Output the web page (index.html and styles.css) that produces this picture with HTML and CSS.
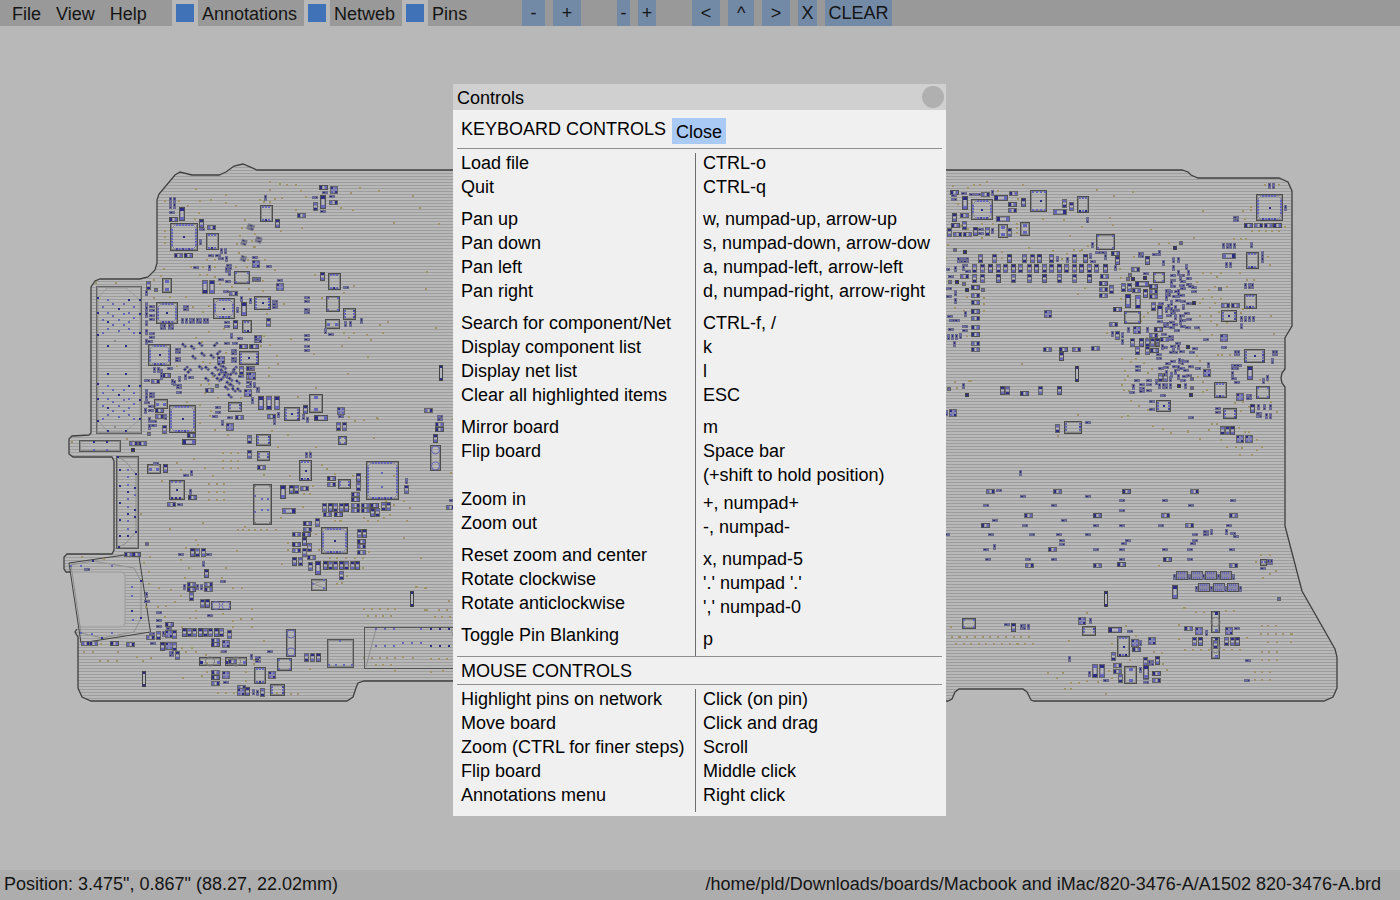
FILE: index.html
```html
<!DOCTYPE html>
<html lang="en">
<head>
<meta charset="utf-8">
<title>Board viewer</title>
<link rel="stylesheet" href="styles.css">
</head>
<body>
<header class="menubar">
  <nav class="menus">
    <button class="menu">File</button>
    <button class="menu">View</button>
    <button class="menu">Help</button>
  </nav>
  <input class="check" type="checkbox" id="annotations" checked><label class="check-label" for="annotations">Annotations</label>
  <input class="check" type="checkbox" id="netweb" checked><label class="check-label" for="netweb">Netweb</label>
  <input class="check" type="checkbox" id="pins" checked><label class="check-label last" for="pins">Pins</label>
  <div class="tools">
    <button class="tool w23">-</button>
    <button class="tool w28">+</button>
  </div>
  <div class="tools">
    <button class="tool w13">-</button>
    <button class="tool w18">+</button>
  </div>
  <div class="tools">
    <button class="tool w28">&lt;</button>
    <button class="tool w26">^</button>
    <button class="tool w28">&gt;</button>
    <button class="tool w19">X</button>
    <button class="tool w67">CLEAR</button>
  </div>
</header>
<main class="stage">
  <svg class="board" id="board" viewBox="0 26 1400 844" aria-label="Circuit board">
    <defs>
      <pattern id="lines" width="6" height="3" patternUnits="userSpaceOnUse"><rect y="2" width="6" height="1" fill="#9d9d9d"/></pattern>
    </defs>
  </svg>
</main>
<footer class="status">
  <span>Position: 3.475", 0.867" (88.27, 22.02mm)</span>
  <span>/home/pld/Downloads/boards/Macbook and iMac/820-3476-A/A1502 820-3476-A.brd</span>
</footer>
<div class="overlay">
  <section class="dialog" role="dialog" aria-labelledby="dialog-title">
    <div class="titlebar">
      <h1 class="title" id="dialog-title">Controls</h1>
      <button class="dot" aria-label="Close window"></button>
    </div>
    <div class="content">
      <div class="heading keyboard">
        <h2 class="name">KEYBOARD CONTROLS</h2>
        <button class="close">Close</button>
      </div>
      <div class="columns">
        <ul class="list">
          <li>Load file</li>
          <li>Quit</li>
          <li class="group">Pan up</li>
          <li>Pan down</li>
          <li>Pan left</li>
          <li>Pan right</li>
          <li class="group">Search for component/Net</li>
          <li>Display component list</li>
          <li>Display net list</li>
          <li>Clear all highlighted items</li>
          <li class="group">Mirror board</li>
          <li>Flip board</li>
          <li class="after-blank">Zoom in</li>
          <li>Zoom out</li>
          <li class="group">Reset zoom and center</li>
          <li>Rotate clockwise</li>
          <li>Rotate anticlockwise</li>
          <li class="group">Toggle Pin Blanking</li>
        </ul>
        <ul class="list keys">
          <li>CTRL-o</li>
          <li>CTRL-q</li>
          <li class="group">w, numpad-up, arrow-up</li>
          <li>s, numpad-down, arrow-dow</li>
          <li>a, numpad-left, arrow-left</li>
          <li>d, numpad-right, arrow-right</li>
          <li class="group">CTRL-f, /</li>
          <li>k</li>
          <li>l</li>
          <li>ESC</li>
          <li class="group">m</li>
          <li>Space bar</li>
          <li>(+shift to hold position)</li>
          <li class="spaced">+, numpad+</li>
          <li>-, numpad-</li>
          <li class="group">x, numpad-5</li>
          <li>'.' numpad '.'</li>
          <li>',' numpad-0</li>
          <li class="group">p</li>
        </ul>
      </div>
      <div class="heading mouse">
        <h2 class="name">MOUSE CONTROLS</h2>
      </div>
      <div class="columns">
        <ul class="list">
          <li>Highlight pins on network</li>
          <li>Move board</li>
          <li>Zoom (CTRL for finer steps)</li>
          <li>Flip board</li>
          <li>Annotations menu</li>
        </ul>
        <ul class="list keys">
          <li>Click (on pin)</li>
          <li>Click and drag</li>
          <li>Scroll</li>
          <li>Middle click</li>
          <li>Right click</li>
        </ul>
      </div>
    </div>
  </section>
</div>
<script src="board.js"></script>
</body>
</html>
```

FILE: styles.css
```css
* {
  box-sizing: border-box;
}

body {
  margin: 0;
  height: 100vh;
  display: flex;
  flex-direction: column;
  background: #b8b8b8;
  color: #141414;
  font: 18px/20px "Liberation Sans", Arial, sans-serif;
}

button {
  margin: 0;
  padding: 0;
  border: 0;
  background: none;
  color: inherit;
  font: inherit;
}

h1,
h2,
ul {
  margin: 0;
  padding: 0;
  font: inherit;
  list-style: none;
}

.menubar {
  display: flex;
  height: 26px;
  background: #999;
  line-height: 26px;
  white-space: nowrap;
}

.menus {
  display: flex;
  gap: 15px;
  width: 172px;
  padding: 1px 0 0 12px;
}

.check {
  appearance: none;
  width: 26px;
  height: 26px;
  margin: 0;
  border: 4px solid #b8b8b8;
  background: #b8b8b8;
}

.check:checked {
  background: #3f72b6;
}

.check-label {
  padding: 1px 7px 0 4px;
}

.check-label.last {
  width: 94px;
}

.tools {
  display: flex;
  gap: 8px;
  margin-right: 36px;
}

.tool {
  height: 26px;
  padding-top: 1px;
  background: #738aa6;
  line-height: 25px;
  text-align: center;
}

.w13 { width: 13px; }
.w18 { width: 18px; }
.w19 { width: 19px; }
.w23 { width: 23px; }
.w26 { width: 26px; }
.w28 { width: 28px; }
.w67 { width: 67px; }

.stage {
  flex: 1;
  min-height: 0;
}

.board {
  display: block;
  width: 100%;
  height: 100%;
}

.status {
  display: flex;
  justify-content: space-between;
  padding: 4px 19px 6px 4px;
  background: #adadad;
  white-space: nowrap;
}

.overlay {
  position: fixed;
  inset: 0;
  display: flex;
  align-items: center;
  justify-content: center;
  padding-right: 1px;
}

.dialog {
  width: 493px;
  background: #f0f0f0;
  color: #000;
}

.titlebar {
  display: flex;
  align-items: center;
  justify-content: space-between;
  height: 26px;
  padding: 0 2px 0 4px;
  background: #d0d0d0;
}

.title {
  padding-top: 2px;
}

.dot {
  width: 22px;
  height: 22px;
  border-radius: 50%;
  background: #b0b0b0;
}

.content {
  padding: 8px 4px 4px;
}

.heading {
  display: flex;
  align-items: flex-start;
  gap: 6px;
  padding: 0 4px 4px;
  border-bottom: 1px solid #8f8f8f;
}

.heading.mouse {
  padding: 4px 4px 3px;
  border-top: 1px solid #8f8f8f;
}

.keyboard .name {
  padding-top: 1px;
}

.close {
  height: 26px;
  padding: 2px 4px 0;
  background: #a9caf4;
}

.columns {
  display: grid;
  grid-template-columns: 238px 1fr;
  padding-top: 4px;
}

.list {
  display: flex;
  flex-direction: column;
  gap: 4px;
  padding: 0 0 7px 4px;
  white-space: nowrap;
}

.keys {
  padding-left: 7px;
  border-left: 1px solid #6e6e6e;
}

.group {
  margin-top: 8px;
}

.spaced {
  margin-top: 4px;
}

.after-blank {
  margin-top: 24px;
}
```

FILE: board.js
```js
// Board drawing. Each sheet has an origin in board units; part positions
// inside a sheet are on a grid of three steps per unit.
const BODY = '#7c7c84', EDGE = '#666', DARK = '#434343';
const PAD = '#6666b8', PIN1 = '#2d2d85', LIGHT = '#b4b4bc', VIA = '#9f9468';

// Two-pad parts, centre x,y: width and height in units.
const SIZES = { H: [9, 5], V: [5, 9], h: [6, 3], v: [3, 6], L: [14, 6], l: [6, 14], b: [4, 4], B: [8, 8] };

const sheets = [
  { at: [60, 150],
    H: '340,208 453,231 355,315 386,315 520,429 588,388',
    V: '424,220 265,407',
    h: '337,186 426,238 453,316 473,316 483,326 408,352 506,346 506,354 483,388 504,394 497,424 585,322',
    v: '332,150 332,168 342,150 342,168 421,276 499,327 485,303 496,303 447,354 500,360 508,368 259,430',
    l: '366,192 434,410 457,412', b: '289,421', B: '587,341', d: '570,231 552,277 550,326 595,269',
    q: '331,220,81,81', t: '439,250,36,48', c: '523,364,46,37', p: '307,385,28,43',
    o: '407,117 315,153 357,153 384,168 420,153 453,150 498,135 498,159 528,168 417,189 405,207 315,243 315,261 315,279 555,210 547,234 530,282 536,309 541,258 560,352 575,273 584,291 564,330 312,357 303,378 420,375 429,352 440,330 465,330 465,352 441,375 528,350 392,350 465,381 480,402 516,411 567,417 282,390 168,399 108,399' },
  { at: [250, 150],
    H: '220,112 250,156 155,196', V: '82,220 195,168 54,517 217,380',
    h: '225,127 195,142 245,140 220,184 17,388 58,348 91,391 75,454 75,464 75,473 170,442 170,454 170,477 170,488 170,556 170,567 289,413 243,552',
    v: '46,144 286,522 301,522 334,513 226,542', l: '219,156', B: '251,121 91,411 23,567', d: '4,232 27,270',
    t: '31,166,35,49 235,370,35,49', c: '229,437,38,45', s: '280,474,36,34', m: '11,439,47,38', p: '226,508,42,27',
    o: '60,96 90,102 111,105 138,105 60,120 75,147 96,144 60,156 42,156 30,150 153,123 168,141 330,114 303,129 387,123 273,174 309,180 138,180 156,234 93,243 15,252 489,138 510,174 432,219 567,222 6,273 12,291 45,330 75,360 39,393 39,423 102,462 51,492 195,375 216,444 282,428 312,408 531,366 528,417 414,516 390,525 558,534 399,549 351,555 363,570 282,549 312,549 297,564 123,567 42,558' },
  { at: [60, 290],
    H: '551,168 580,170 570,236 319,255 285,273 448,301 297,362 297,378 537,382 394,437 219,459 246,459',
    V: '526,103 545,240 313,418 315,536 567,449 567,493',
    h: '275,48 275,60 275,75 275,88 275,130 275,142 270,155 379,48 379,58 500,98 500,109 540,146 500,160 525,160 592,147 355,178 355,186 355,204 355,212 521,180 521,191 521,204 521,215 542,258 568,278 568,289 330,234 393,263 262,272 358,285 358,293 358,307 275,310 275,320 262,338 272,350 272,362 283,395 283,405 474,353 474,367 464,380 510,381 287,519 378,556',
    v: '259,10 259,45 259,57 259,75 259,100 259,125 259,155 303,111 313,111 328,111 338,111 368,93 379,93 390,93 401,93 411,93 422,93 432,93 442,93 533,60 545,27 571,32 514,137 583,285 595,300 578,330 283,240 294,240 304,245 304,262 375,260 358,268 336,275 344,278 259,305 259,325 257,362 316,380 268,390 268,410 487,398 393,550',
    L: '387,457', l: '553,58', b: '268,432 219,479 470,288', B: '484,210 570,258 565,309 510,410',
    e: '372,166 398,172 422,163 429,193 402,202 422,233 441,235 441,268 460,253 480,225 493,232 487,243 475,268 500,250 512,268 497,258 524,247 534,276 505,280 515,286 500,294 522,300 537,300 510,318 457,199 470,236',
    f: '467,163 476,188 378,235 388,243 525,235 487,265 515,250 481,250',
    q: '289,35,63,62 460,25,62,60 265,163,66,62 328,344,79,80', t: '547,90,28,37', s: '505,337,40,28', m: '538,183,58,38', p: '283,328,40,27 262,522,40,27',
    o: '282,24 330,22 378,22 400,50 446,48 430,65 443,93 490,82 448,127 493,117 409,143 427,155 430,215 350,228 450,218 498,190 400,262 460,262 423,285 448,283 505,265 450,378 452,362 473,325 505,435 380,335 420,345 543,325 436,308 201,446 363,540 350,520 36,455 305,573 403,508 435,533 460,558 447,582 470,582 492,582 489,489 513,489 534,489 489,513 513,513 534,513 489,535 513,535 534,535 465,420 420,400' },
  { at: [250, 340],
    H: '12,20 65,228 35,382 243,414 243,432 317,462 317,479 163,444 232,524 266,524 317,495 345,495 373,495 317,511 345,511 173,551 173,567 140,583 168,583 535,212 568,252 568,268 600,501',
    V: '166,207 265,258 284,258 325,413 325,440 469,448 124,448 140,448 222,501 240,501 257,501 273,501 289,501 399,500 414,500 367,517 383,517 203,546 555,296',
    h: '7,86 170,20 170,31 272,229 571,228 571,238 605,480', v: '2,135 13,135 23,150 8,182 160,230 173,240 85,225 73,247 168,345 180,345 469,424',
    L: '213,234 118,512', l: '33,188 57,188 80,188 99,455', B: '7,107 272,212', k: '568,76,10,48',
    q: '349,364,97,115', m: '101,202,44,40', p: '178,163,40,54', c: '265,289,25,25 9,433,53,121', s: '19,283,42,34 22,334,37,28 265,418,37,27', u: '148,361,37,60', y: '541,316,29,75',
    pins: '15,469 36,477 54,477 36,510 54,510 15,517 397,398 397,440',
    o: '60,15 192,42 33,18 81,48 84,72 57,84 57,108 276,18 354,51 294,102 198,144 144,171 297,231 315,243 342,240 381,235 384,237 115,285 66,273 84,321 198,321 181,335 372,294 216,375 231,387 255,402 309,408 120,408 348,411 433,408 603,399 42,405 190,437 180,462 162,462 408,482 480,504 159,501 462,483 15,570 33,570 51,570 78,570 92,534 343,533 354,542 402,533 420,525 255,542 270,542 471,542 462,594 608,237' },
  { at: [60, 480],
    H: '398,52 334,73 393,312 393,328 444,312 444,328 328,432 272,472 467,482 467,494 75,491 100,491 163,491 212,492 466,576 466,593 466,609 205,224 230,224 543,622 518,544',
    V: '398,217 413,217 431,217 438,280 393,350 428,369 443,369 296,465 343,463 306,499 344,499 352,525 372,457 388,457 404,457 420,457 436,457 452,457 469,457 485,457 507,462 563,635',
    h: '360,72 82,267 364,224 446,224 488,304 262,365 450,407 297,398 298,422 298,439 277,460 278,489 326,445 492,514 498,607',
    v: '391,36 431,252 373,320 411,320 424,320 260,345 309,462 331,522 338,522 574,530', b: '260,192 592,540', B: '326,463 326,499 498,492 499,584 543,637',
    k: '246,574,10,48', u: '326,0,46,58', y: '454,364,58,25', z: '418,532,62,25 496,532,62,25',
    o: '305,3 447,12 470,12 492,12 447,36 470,36 492,36 447,60 470,60 492,60 243,102 429,129 330,147 555,141 534,150 550,150 567,150 584,150 408,180 378,205 414,195 363,240 531,213 270,231 252,249 66,231 132,237 387,264 498,264 268,275 486,294 376,294 268,313 298,325 333,330 363,349 519,325 545,325 346,365 318,378 257,380 294,380 407,392 315,411 489,402 408,415 390,415 519,422 543,417 366,440 519,440 576,387 576,440 72,516 99,516 123,492 174,516 231,531 120,543 144,543 171,543 273,534 249,543 366,504 378,516 396,504 408,516 438,525 484,516 441,549 440,576 369,594 426,588 558,576 558,603 474,638 498,638 522,638' },
  { at: [250, 500],
    H: '139,134 139,151 184,173 333,123 333,139 333,156',
    V: '162,125 179,142 162,157 133,184 150,184 182,198 225,196 241,196 257,196 274,196 290,196 306,196 323,196 274,226 327,100 343,100 169,471 187,471 205,471 37,577',
    h: '60,453 23,473 23,483', v: '4,470 10,576 22,578', l: '204,203', B: '66,525', k: '481,272,10,48',
    q: '214,80,79,78', y: '109,386,28,80', c: '80,473,42,35', t: '13,502,34,48', s: '61,552,43,34', r: '184,236,45,33 232,417,79,85 343,381,290,124',
    pins: '188,252 223,240 223,264 270,422 236,496 259,496 282,496 306,496 378,386 405,386 432,386 514,386 378,438 405,438 432,438 460,430 487,430 514,430',
    dark: '542,386 569,386 597,386 542,438 569,438 597,438',
    o: '6,327 6,357 6,381 42,423 12,480 12,492 180,507 81,579 123,582 144,582 342,327 366,327 390,327 414,327 435,327 354,348 378,348 400,348 423,348 498,261 501,261 525,264 528,264 597,303 525,330 530,330 567,330 590,330 555,351 576,351 600,351 342,474 366,474 390,474 412,474 435,474 460,471 489,474 542,476 567,476 590,476 378,495 400,495 423,495 435,513 543,516 579,513 114,130 114,150 96,192 198,103 208,150 240,173 262,173 288,173 315,173 340,173 357,156 339,204 291,228 262,252 275,248 462,114 513,174 471,63 383,63 432,15 254,63 273,63' },
  { at: [940, 150],
    H: '43,126 136,133 220,130 217,163 217,180 72,196 47,225 52,252 81,252 525,310 73,379 493,379 106,411 106,435 106,457 106,483 106,506 106,531 106,553 106,579 106,597 491,401 491,419 491,436 533,479 519,524 322,597 371,597 409,597 467,594',
    V: '249,157 373,160 394,168 43,203 72,226 28,246 105,244 141,244 209,248 531,331 120,326 162,326 208,326 254,326 277,326 299,326 333,326 404,326 435,326 104,354 128,354 150,354 175,354 195,354 221,354 241,354 267,354 288,354 312,354 333,354 358,354 379,354 404,354 425,354 449,354 470,354 496,354 104,384 128,384 175,384 221,384 267,384 312,384 358,384 404,384 449,384 515,418 531,556 364,620',
    h: '43,137 43,147 72,130 96,132 114,132 123,238 123,249 475,307 493,307 459,335 78,326 78,335 75,346 22,357 85,364 34,378 28,416 28,440 30,499 35,510 52,510 34,538 75,530 75,541',
    v: '157,129 441,209 157,242 456,285 451,319 497,320 525,354 352,328 382,330 54,330 64,330 46,357 70,355 46,430 46,453 76,493 26,560 38,560 48,560 61,558 43,582 517,553',
    L: '183,145 360,186 189,208', l: '76,158', b: '45,300 75,306 30,396 51,396 72,401 80,419 130,421', B: '324,493', k: '406,647,10,48',
    q: '94,148,63,61', t: '270,121,47,64 412,138,34,48', p: '175,223,28,40 241,217,28,40', c: '469,251,55,45', dark: '304,153',
    o: '141,96 102,105 120,105 249,105 84,114 39,107 174,123 174,138 54,162 234,147 309,207 372,210 471,120 522,138 579,126 518,225 510,204 518,252 426,231 389,258 231,222 231,235 127,222 159,222 127,264 84,237 24,285 267,294 186,306 186,325 339,303 381,312 367,327 402,300 420,303 426,300 445,288 18,324 231,250 63,228 132,444 132,462 132,483 81,440 435,414 414,432 543,447 45,474 72,483 81,558 502,549 246,642' },
  { at: [1120, 150],
    H: '386,226 415,226 444,226 472,226 45,357 49,422 100,409 100,425 100,440 115,537 100,555 134,568 102,600 317,466 345,466',
    V: '82,331 9,413 27,413 76,430 100,470 36,576 65,577 81,577 96,577 111,577 52,602 81,602 397,776 306,842 321,842 337,842 122,682 137,682',
    h: '347,202 347,212 105,313 78,371 313,592 347,645 358,645 347,655 341,685 351,696 387,735 387,745 417,790 417,798 293,776 293,787 213,803 95,755 95,777 129,737 160,376 160,390 160,410 150,425 170,425 187,375 207,386 190,395 185,405 212,408 221,412 222,425 207,402 190,415 145,435 165,440 175,452 190,455 207,460 186,435 122,460 170,482 160,490 148,497 187,495 200,490 207,508 188,510 120,515 137,520 155,517 165,523 170,542 190,530 205,532 230,532 137,530 155,532 131,552 154,558 175,580 154,568 134,591 160,590 165,607 155,607 185,603 216,607 224,596 117,613 117,625 143,640 158,635 197,633 187,655 214,648 233,656 199,662 208,676 188,690 196,678 122,655 137,652 166,650 65,703 65,714 65,725 88,692 88,703 88,720 52,691 36,727 55,650 55,661 258,568',
    v: '449,107 459,107 496,173 58,314 68,314 118,308 130,339 160,331 175,331 160,355 198,350 24,541 81,541 7,555 7,577 310,288 321,288 332,288 342,288 394,285 320,345 331,345 427,313 427,330 377,408 387,408 397,408 365,507 376,507 389,507 400,507 365,527 459,610 469,610 458,632 346,610 355,610 336,650 336,673 442,683 429,694 265,645 415,772 434,772 451,772 438,797 451,797 175,370 205,370 180,385 155,400 138,425 148,425 175,425 140,445 155,460 145,470 155,480 140,480 160,485 167,475 165,500 180,500 180,515 190,470 175,435 127,590 160,600 175,592 178,632 187,635 175,655 165,665 155,675 175,680 140,670 152,687 118,708 129,708 140,708 150,708 195,707 108,695 41,710',
    L: '65,402 327,318', l: '24,453 53,455 120,485 391,670', b: '184,278 164,295 30,375 38,386 25,388 74,384 300,417 223,458 115,583 203,592 217,687 177,709 216,714 214,736', B: '52,541 311,564 262,668 361,741 361,868 388,868',
    q: '407,131,78,78', t: '377,307,36,48 371,433,35,43 281,695,36,45', c: '100,367,34,31 12,484,47,37 409,709,40,36', m: '304,481,46,34 373,596,61,38 107,751,42,34', s: '310,773,40,30',
    o: '39,126 249,183 93,240 222,264 147,279 117,282 42,321 435,105 477,105 495,231 393,171 393,180 369,183 375,207 396,243 417,243 438,243 456,243 477,243 342,267 363,267 378,267 444,321 450,345 360,370 381,390 402,390 303,370 274,370 291,382 249,370 321,411 231,396 267,421 285,412 276,440 249,447 240,459 285,460 303,447 270,475 297,487 240,498 273,498 345,489 363,489 370,478 321,520 273,514 291,525 453,497 463,552 240,540 276,556 231,619 294,615 306,616 330,616 240,634 0,357 3,385 85,490 72,500 63,513 81,564 6,627 33,637 48,628 72,640 84,670 96,658 15,664 24,679 6,705 36,705 15,691 27,724 12,721 249,697 249,727 234,682 261,720 420,691 444,694 370,757 387,772 345,760 364,784 471,786 454,757 33,754 57,768 84,781 24,798 6,801 98,828 129,837 153,849 205,843 205,846 267,840 240,867 303,870 276,822 291,822 357,834 375,847 388,847 349,891 366,894 411,870 411,900 426,891 396,915 360,916 321,891' },
  { at: [940, 380],
    H: '253,41 150,333 353,333 559,333 763,333 266,407 471,407 676,407 880,407 135,435 748,435 337,509 682,538 267,555 471,555 544,553 880,556',
    V: '186,30 203,30 301,30 358,30 353,145',
    h: '445,127 178,332 249,348 445,348 545,361 674,361 878,361 138,377 342,377 752,377 545,392 166,421 371,421 255,435 467,435 546,435 663,435 868,435 152,464 276,464 357,464 444,464 765,464 20,464 366,480 366,493 563,480 551,490 765,480 759,490 138,509 467,509 545,509 674,509 751,509 877,509 145,538 264,538 343,538 545,538 751,538 798,453 798,463 878,460 887,469',
    v: '71,17 20,100 241,280 163,502 813,457 858,457', b: '26,27 80,45', B: '38,100', s: '373,122,50,36',
    o: '51,24 93,3 87,3 45,6 414,105 420,156 354,168 657,559' },
  { at: [940, 540],
    H: '589,329 533,377 533,393 649,401 649,421 744,265',
    V: '220,261 519,349 615,364 651,360 540,414 764,304 780,304 860,304 876,304 893,304 827,312',
    h: '200,253 569,275 498,421 619,415 619,426 890,265 923,361 920,421 969,86',
    v: '703,110 747,110 791,110 835,110 879,110 769,146 813,146 857,146 901,146 243,262 254,262 264,262 451,242 601,310 388,358 629,368 638,368 447,402 601,390 798,278 984,66 994,66',
    L: '526,270', l: '705,156 464,394 487,394 619,395', b: '1018,176', B: '427,242 586,308 636,303 776,274 868,273', k: '493,152,10,48',
    w: '708,94,33,25 752,94,33,25 796,94,33,25 840,94,33,25 774,130,33,25 818,130,33,25 862,130,33,25',
    c: '66,235,38,30', s: '427,259,40,28 960,58,20,22', u: '532,288,37,61', p: '553,379,37,52', z: '814,213,25,62 814,292,25,63',
    o: '36,291 56,291 60,291 82,291 105,291 128,291 151,291 174,291 198,291 222,291 244,291 267,291 48,312 71,312 94,312 117,312 139,312 162,312 186,312 210,312 231,312 234,312 256,312 279,312 33,261 440,219 387,303 516,312 588,288 558,258 570,360 324,399 369,399 351,414 393,429 417,429 441,423 474,426 375,447 393,447 498,462 507,393 516,414 642,336 666,339 669,372 681,390 717,297 717,255 732,204 735,204 768,216 792,216 858,213 882,213 735,330 759,330 783,330 807,330 852,330 876,330 900,330 921,294 966,258 984,258 1008,258 963,282 984,282 1008,282 1030,282 1053,282 1056,282 984,306 1011,306 1053,306 966,336 987,336 1011,336 966,360 987,360 1011,360 945,396 966,396 990,396 945,420 966,420 990,420 963,46 990,46 948,66 1008,93 990,102 969,114' }
];

const out = [];
const rect = (x, y, w, h, fill) => out.push(`<rect x="${x}" y="${y}" width="${w}" height="${h}" fill="${fill}"/>`);
const frame = (x, y, w, h, stroke, fill = 'none') => out.push(`<rect x="${x + .5}" y="${y + .5}" width="${w - 1}" height="${h - 1}" fill="${fill}" stroke="${stroke}"/>`);
const path = (d, stroke, fill = 'none') => out.push(`<path d="${d}" fill="${fill}" stroke="${stroke}"/>`);
const parse = s => (s || '').split(' ').filter(Boolean).map(p => p.split(',').map(Number));

function part(kind, cx, cy, n) {
  const [w, h] = SIZES[kind];
  const x = Math.round(cx - w / 2), y = Math.round(cy - h / 2);
  const a = n % 3 === 1 ? PAD : PIN1, b = n % 3 === 1 ? PIN1 : PAD;
  if (kind === 'b') {
    frame(x, y, 4, 4, n % 2 ? DARK : EDGE);
    rect(x + 1, y + 1, 2, 2, n % 2 ? PIN1 : '#6767a5');
  } else if (kind === 'B') {
    frame(x, y, 8, 8, EDGE, '#8585b0');
    rect(x + 1, y + 1, 2, 2, PIN1);
    rect(x + 5, y + 1, 2, 2, PAD);
    rect(x + 1, y + 5, 2, 2, PAD);
    rect(x + 5, y + 5, 2, 2, n % 2 ? PAD : PIN1);
  } else if (kind === 'h' || kind === 'v') {
    rect(x, y, w, h, '#6c6c88');
    if (kind === 'h') { rect(x + 1, y + 1, 2, 1, a); rect(x + 4, y + 1, 1, 1, b); }
    else { rect(x + 1, y + 1, 1, 2, a); rect(x + 1, y + 4, 1, 1, b); }
  } else {
    frame(x, y, w, h, n % 3 ? EDGE : '#525252', '#8c8c9c');
    const long = Math.max(w, h) > 9;
    if (long) rect(x + 2, y + 2, w - 4, h - 4, LIGHT);
    else if (w > h) rect(x + 4, y + 1, 1, h - 2, LIGHT);
    else rect(x + 1, y + 4, w - 2, 1, LIGHT);
    const k = long ? 3 : 2;
    if (w > h) { rect(x + 1, y + 1, k, h - 2, a); rect(x + w - k - 1, y + 1, k, h - 2, b); }
    else { rect(x + 1, y + 1, w - 2, k, a); rect(x + 1, y + h - k - 1, w - 2, k, b); }
  }
}

function chip(kind, x, y, w, h) {
  const r = x + w, b = y + h, mx = Math.round(x + w / 2) - 1, my = Math.round(y + h / 2) - 1;
  if (kind === 'k') { rect(x, y, w + 1, h, DARK); rect(x + 1, y + 3, w - 1, h - 6, LIGHT); rect(x + 1, y + 1, w - 1, 2, PIN1); rect(x + 1, b - 3, w - 1, 2, PIN1); return; }
  if (kind === 'w') {
    frame(x, y, w, h, '#505050', '#8888a4');
    for (let i = x + 2; i < r - 2; i += 2) { rect(i, y + 1, 1, 2, PAD); rect(i, b - 3, 1, 2, PAD); }
    return;
  }
  frame(x, y, w, h, kind === 'r' ? '#555' : '#4d4d4d');
  if (kind === 'r') { if (w < 60) frame(x + 1, y + 1, w - 2, h - 2, '#8c8c8c'); return; }
  frame(x + 1, y + 1, w - 2, h - 2, '#868686');
  if (kind === 'y' || kind === 'z') {
    const tall = h > w, rad = kind === 'y' ? 4 : 4.5;
    const cx = x + w / 2, cy = y + h / 2, off = kind === 'y' ? (tall ? h : w) / 2 - 5 : 0;
    for (const s of off ? [-1, 1] : [0])
      out.push(`<circle cx="${tall ? cx : cx + s * off}" cy="${tall ? cy + s * off : cy}" r="${rad}" fill="none" stroke="${off ? PAD : '#777'}"/>`);
    if (!off) {
      rect(tall ? mx : x + 1, tall ? y + 1 : my, 3, 3, PIN1);
      rect(tall ? mx : r - 4, tall ? b - 4 : my, 3, 3, PAD);
    }
    return;
  }
  if (kind === 'p') {
    if (h > w) { rect(mx - 1, y + 2, 4, 3, PAD); rect(mx - 1, b - 5, 4, 3, PAD); }
    else { rect(x + 2, my, 3, 3, PAD); rect(r - 5, my, 3, 3, PAD); }
    return;
  }
  if (kind === 'c') {
    for (const [px, py] of [[x + 1, y + 1], [r - 3, y + 1], [x + 1, b - 3], [r - 3, b - 3]]) rect(px, py, 2, 2, h > 30 ? '#777' : PAD);
    return;
  }
  if (kind === 'q') {
    const k = 5;
    path(`M${x + k} ${y + 2}H${r - k}L${r - 2} ${y + k}V${b - k}L${r - k} ${b - 2}H${x + k}L${x + 2} ${b - k}V${y + k}Z`, '#8484a4');
    for (let i = x + 6; i < r - 6; i += 3) { rect(i, y + 1, 2, 2, PAD); rect(i, b - 3, 2, 2, i % 2 ? PAD : '#4747a0'); }
    for (let i = y + 6; i < b - 6; i += 3) { rect(x + 1, i, 2, 2, PAD); rect(r - 3, i, 2, 2, PAD); }
    if (w < 30) rect(mx, my, 2, 2, PIN1);
    return;
  }
  if (kind === 't' || kind === 'u') {
    const step = w > 13 ? 4 : 3;
    for (let i = x + 2; i < r - 2; i += step) { rect(i, y + 1, 2, 2, PAD); rect(i, b - 3, 2, 2, i % 2 ? PIN1 : PAD); }
    if (kind === 'u') rect(mx, my, 2, 2, PIN1);
    return;
  }
  for (let i = y + 2; i < b - 2; i += 3) { rect(x + 1, i, 2, 2, PAD); rect(r - 3, i, 2, 2, i % 2 ? PAD : '#4747a0'); }
  if (kind === 'm') rect(mx, my, 2, 2, PIN1);
}

// Board outline and copper lines
const left = 'M70 572H66L64 569V557L67 554H112L114 550V461L112 457H73L69 454V439L72 436L89 435L91 433V287L95 281L100 279H140L148 277L155 270L157 263V200L159 194L175 175L180 172L192 175H219L226 172L234 166L243 164L257 170H1182L1188 172L1191 175L1198 178H1279L1288 182L1292 191V326L1286 336L1285 338V369L1282 373L1281 378L1282 383L1285 387V526L1302 591L1335 649L1337 657V688L1333 697L1324 701H1034L1031 700L1027 692L1023 689H959L955 692L952 699L948 701H460V681H364L358 683L356 688L353 697L347 701H91L82 697L78 688V637L75 632L77 629';
const cutout = 'H120Q125 627 125 622V578Q125 572 120 572H70';
path(left + cutout, 'none', 'url(#lines)');
out.push(`<path d="${left}" fill="none" stroke="#404040" stroke-width="1.3"/>`);
path('M77 627' + cutout, '#999');

// Left edge connectors
frame(96, 286, 46, 148, '#646464');
path('M98 298L107 288H126L140 300V419L126 431H107L98 420Z', '#9a9a9a');
frame(97, 287, 44, 146, '#909090');
const grid = '145,30 208,30 160,41 193,41 129,52 223,52 145,68 208,68 160,79 193,73 129,90 176,90 223,84 208,96 160,106 193,106 145,117 208,117 129,128 176,122 223,128';
const gridDark = '176,57 145,96 208,30 113,24 239,30 113,68 239,73 113,134 239,128';
for (const dy of [0, 258]) {
  for (const [x, y] of parse(grid)) rect(59 + Math.round(x / 3), 289 + Math.round((y + dy) / 3), 2, 2, PAD);
  for (const [x, y] of parse(gridDark)) rect(59 + Math.round(x / 3), 289 + Math.round((y + dy) / 3), 2, 2, PIN1);
}
for (const [x, y] of [[107, 345], [125, 345], [107, 373], [125, 373], [107, 430], [125, 430]]) rect(x, y, 2, 2, PIN1);
rect(114, 340, 2, 2, '#8a8a8a');
rect(114, 426, 2, 2, '#8a8a8a');
frame(79, 440, 42, 12, '#555');
frame(80, 441, 40, 10, '#8c8c8c');
for (const [x, y, c] of [[93, 441, PIN1], [106, 441, PIN1], [93, 449, PAD], [106, 449, PAD]]) rect(x, y, 2, 2, c);
frame(116, 456, 23, 93, '#555');
frame(117, 457, 21, 91, '#8c8c8c');
path('M118 457L125 461L136 474V532L125 544L118 547', '#8f8f8f');
for (const [x, y] of parse('203,-29 203,-8 203,14 203,58 225,46 203,80 203,124 203,146')) rect(59 + Math.round(x / 3), 479 + Math.round(y / 3), 2, 2, PAD);
for (const [x, y] of parse('175,-68 180,-29 229,-18 180,18 225,25 203,36 180,69 225,91 203,102 225,112 180,120 229,157 180,167 203,168 176,202')) rect(59 + Math.round(x / 3), 479 + Math.round(y / 3), 2, 2, PIN1);
path('M69 563L138.500 553L150.500 632L81 643Z', '#404040');
path('M71 565L93 561L134 568L141 581V618L134 632L102 638L81 633Z', '#8f8f8f');
for (const [x, y] of parse('33,258 63,258 155,257 215,322 215,349 218,421 155,460 96,462 62,459')) rect(59 + Math.round(x / 3), 479 + Math.round(y / 3), 2, 2, PAD);
for (const [x, y] of parse('99,243 215,394 242,303 242,413 127,474')) rect(59 + Math.round(x / 3), 479 + Math.round(y / 3), 2, 2, PIN1);

// Socket details near the bottom edge
path('M376 629L366 667M451 629L460 660', '#8f8f8f');
path('M325 580L313 584L325 588', '#8f8f8f');

for (const sheet of sheets) {
  const [ox, oy] = sheet.at;
  for (const [x, y] of parse(sheet.o)) rect(ox - 1 + Math.round(x / 3), oy - 1 + Math.round(y / 3), 2, 2, VIA);
  for (const kind of 'rkqtcspmuyzw')
    for (const [x, y, w, h] of parse(sheet[kind]))
      chip(kind, ox + Math.round(x / 3), oy + Math.round(y / 3), Math.max(3, Math.round(w / 3) + (w > 20 ? 1 : 0)), Math.round(h / 3) + (w > 20 ? 1 : 0));
  for (const kind of Object.keys(SIZES))
    parse(sheet[kind]).forEach(([x, y], n) => part(kind, ox + x / 3, oy + y / 3, n));
  for (const [kind, angle] of [['d', 20], ['e', 42], ['f', -45]])
    for (const [x, y] of parse(sheet[kind])) {
      out.push(`<g transform="translate(${ox + x / 3} ${oy + y / 3}) rotate(${angle})">`);
      rect(-3, kind === 'd' ? -3 : -1.5, 6, kind === 'd' ? 6 : 3, BODY);
      if (kind === 'd') { rect(-2, -2, 2, 1, PIN1); rect(1, -2, 1, 1, PAD); rect(-2, 1, 1, 1, PAD); rect(0, 1, 2, 1, PIN1); }
      else { rect(-2.5, -1, 2, 2, PIN1); rect(1, -1, 1.5, 2, '#4a4a9c'); }
      out.push('</g>');
    }
  for (const [x, y] of parse(sheet.pins)) rect(ox - 1 + Math.round(x / 3), oy - 1 + Math.round(y / 3), 2, 2, PAD);
  for (const [x, y] of parse(sheet.dark)) rect(ox - 1 + Math.round(x / 3), oy - 1 + Math.round(y / 3), 2, 2, PIN1);
}
document.getElementById('board').insertAdjacentHTML('beforeend', out.join(''));
```
